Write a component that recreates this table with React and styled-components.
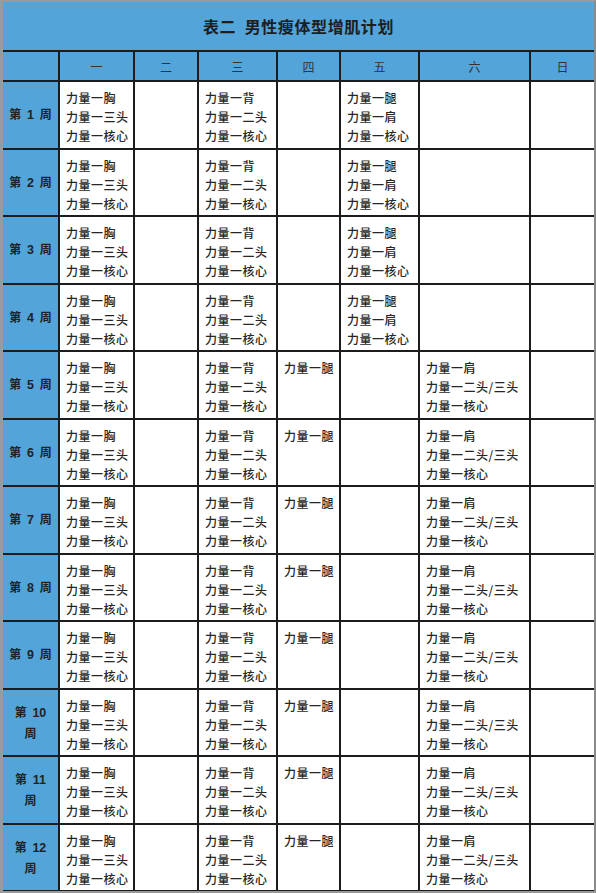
import styled, { createGlobalStyle } from 'styled-components'

const GlobalStyle = createGlobalStyle`
    html, body {
        margin: 0;
        padding: 0;
        background: #ffffff;
    }
    body {
        font-family: "Noto Sans CJK SC", "Liberation Sans", sans-serif;
    }
`

const Frame = styled.div`
    width: 596px;
    height: 893px;
    box-sizing: border-box;
    border-top: 2px solid #9a9a9a;
    border-left: 3px solid #9a9a9a;
    border-bottom: 2px solid #9a9a9a;
    border-right: 2px solid #8a8a8a;
    background: #ffffff;
    overflow: hidden;
`

const Table = styled.table`
    width: 591px;
    border-collapse: collapse;
    table-layout: fixed;
`

const TitleCell = styled.th`
    height: 48px;
    background: #53a4d9;
    color: #1e1e1e;
    font-size: 16px;
    font-weight: 700;
    letter-spacing: 0.6px;
    text-align: center;
    padding: 0;
    border-bottom: 2px solid #1c1c1c;
`

const HeadCell = styled.th`
    height: 28px;
    background: #53a4d9;
    color: #333;
    font-size: 12px;
    font-weight: 400;
    text-align: center;
    padding: 0;
    border: 2px solid #1c1c1c;
    border-top: none;
    &:first-child { border-left: none; }
    &:last-child { border-right: none; }
`

const WeekCell = styled.th`
    height: 65.5px;
    background: #53a4d9;
    color: #222;
    font-size: 12px;
    font-weight: 700;
    line-height: 20px;
    text-align: center;
    padding: 0 4px;
    border: 2px solid #1c1c1c;
    border-left: none;
    word-spacing: 3px;
`

const Num = styled.span`
    font-family: "Liberation Sans", sans-serif;
    font-weight: 700;
    font-size: 12.5px;
`

const Cell = styled.td`
    vertical-align: top;
    padding: 6px 0 0 6px;
    border: 2px solid #1c1c1c;
    &:last-child { border-right: none; }
`

const Line = styled.div`
    font-size: 12px;
    line-height: 19px;
    letter-spacing: 0.5px;
    color: #262626;
    font-weight: 500;
    white-space: nowrap;
`

const days = ['一', '二', '三', '四', '五', '六', '日']
const widths = [56, 75, 64, 79, 63, 79, 111, 64]

const LEG = '\u817F'
const chest = ['力量一胸', '力量一三头', '力量一核心']
const back = ['力量一背', '力量一二头', '力量一核心']
const legsA = ['力量一' + LEG, '力量一肩', '力量一核心']
const legsB = ['力量一' + LEG]
const sat = ['力量一肩', '力量一二头/三头', '力量一核心']

const weeks = Array.from({ length: 12 }, (_, i) => {
    const n = i + 1
    const early = n <= 4
    return {
        n,
        cells: early
            ? [chest, null, back, null, legsA, null, null]
            : [chest, null, back, legsB, null, sat, null],
    }
})

const WeekLabel = ({ n }) => (
    n < 10
        ? <>第 <Num>{n}</Num> 周</>
        : <>第 <Num>{n}</Num><br />周</>
)

const App = () => {
    return (
        <Frame>
            <GlobalStyle />
            <Table>
                <colgroup>
                    {widths.map((w, i) => <col key={i} style={{ width: w }} />)}
                </colgroup>
                <thead>
                    <tr>
                        <TitleCell colSpan={8}>表二&nbsp;&nbsp;男性瘦体型增肌计划</TitleCell>
                    </tr>
                    <tr>
                        <HeadCell></HeadCell>
                        {days.map(d => <HeadCell key={d}>{d}</HeadCell>)}
                    </tr>
                </thead>
                <tbody>
                    {weeks.map(week => (
                        <tr key={week.n}>
                            <WeekCell><WeekLabel n={week.n} /></WeekCell>
                            {week.cells.map((lines, j) => (
                                <Cell key={j}>
                                    {lines && lines.map((t, k) => <Line key={k}>{t}</Line>)}
                                </Cell>
                            ))}
                        </tr>
                    ))}
                </tbody>
            </Table>
        </Frame>
    )
}

export default App
